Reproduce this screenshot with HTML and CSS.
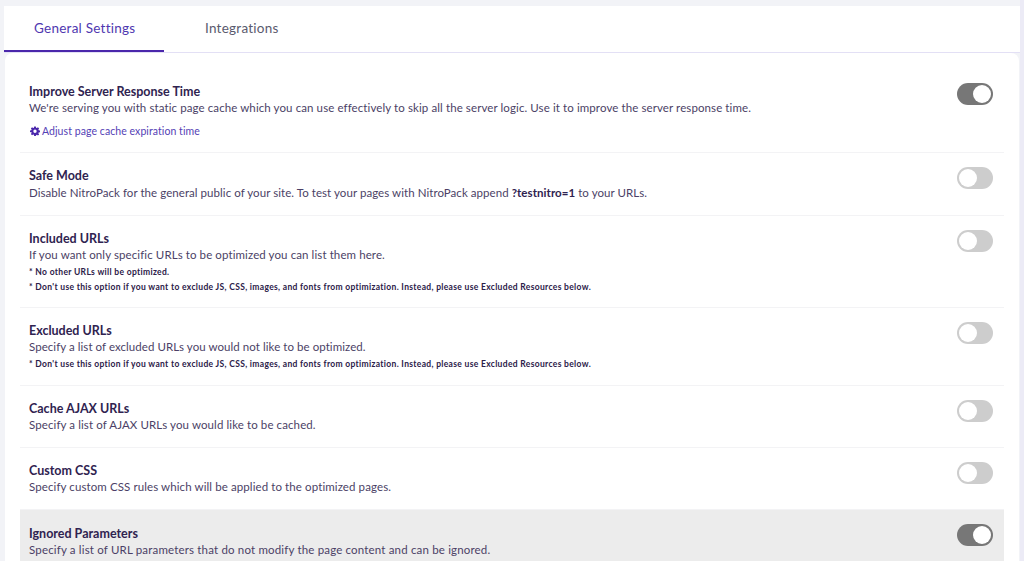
FILE: index.html
```html
<!DOCTYPE html>
<html lang="en">
<head>
<meta charset="utf-8">
<title>General Settings</title>
<link rel="stylesheet" href="styles.css">
</head>
<body>
<main class="page">
  <nav class="tabs">
    <a class="tab active">General Settings</a>
    <a class="tab">Integrations</a>
  </nav>
  <section class="card">
    <div class="row first">
      <div class="info">
        <h3>Improve Server Response Time</h3>
        <p>We're serving you with static page cache which you can use effectively to skip all the server logic. Use it to improve the server response time.</p>
        <a class="link"><svg class="gear" viewBox="0 0 24 24"><path fill-rule="evenodd" d="M10 1h4l.6 3.1 1.9.8 2.6-1.8 2.8 2.8-1.8 2.6.8 1.9L24 11v4l-3.100.6-.8 1.900 1.800 2.600-2.800 2.800-2.600-1.800-1.900.8L14 24h-4l-.6-3.100-1.900-.8-2.600 1.800-2.800-2.800 1.800-2.600-.8-1.900L0 15v-4l3.100-.6.8-1.900L2.100 5.900l2.800-2.800 2.600 1.800 1.900-.8zM12 8.500a4 4 0 1 0 0 8 4 4 0 0 0 0-8z"/></svg>Adjust page cache expiration time</a>
      </div>
      <span class="toggle on"></span>
    </div>
    <div class="row safe">
      <div class="info">
        <h3>Safe Mode</h3>
        <p>Disable NitroPack for the general public of your site. To test your pages with NitroPack append <b>?testnitro=1</b> to your URLs.</p>
      </div>
      <span class="toggle"></span>
    </div>
    <div class="row included">
      <div class="info">
        <h3>Included URLs</h3>
        <p>If you want only specific URLs to be optimized you can list them here.</p>
        <small>* No other URLs will be optimized.</small>
        <small>* Don't use this option if you want to exclude JS, CSS, images, and fonts from optimization. Instead, please use Excluded Resources below.</small>
      </div>
      <span class="toggle"></span>
    </div>
    <div class="row excluded">
      <div class="info">
        <h3>Excluded URLs</h3>
        <p>Specify a list of excluded URLs you would not like to be optimized.</p>
        <small>* Don't use this option if you want to exclude JS, CSS, images, and fonts from optimization. Instead, please use Excluded Resources below.</small>
      </div>
      <span class="toggle"></span>
    </div>
    <div class="row short">
      <div class="info">
        <h3>Cache AJAX URLs</h3>
        <p>Specify a list of AJAX URLs you would like to be cached.</p>
      </div>
      <span class="toggle"></span>
    </div>
    <div class="row short">
      <div class="info">
        <h3>Custom CSS</h3>
        <p>Specify custom CSS rules which will be applied to the optimized pages.</p>
      </div>
      <span class="toggle"></span>
    </div>
    <div class="row highlighted">
      <div class="info">
        <h3>Ignored Parameters</h3>
        <p>Specify a list of URL parameters that do not modify the page content and can be ignored.</p>
      </div>
      <span class="toggle on"></span>
    </div>
  </section>
</main>
</body>
</html>
```
FILE: styles.css
```css
html, body {
  margin: 0;
  height: 561px;
  overflow: hidden;
}
body {
  background: #f2f3f7;
  font-family: "Lato", "Noto Sans", sans-serif;
  color: #3c3056;
}
.page {
  box-sizing: border-box;
  height: 561px;
  padding: 6px 4px 0 4px;
  background: linear-gradient(90deg, #f2f3f7 1020px, #ecebf6 1020px);
}
.tabs {
  display: flex;
  height: 46px;
  background: #fff;
  border-bottom: 1px solid #e3e0f5;
}
.tab {
  box-sizing: border-box;
  height: 46px;
  padding: 13px 0 0 30px;
  font-size: 13.5px;
  line-height: 18px;
  letter-spacing: .25px;
  white-space: nowrap;
  color: #5a5a6e;
}
.tab.active {
  width: 160px;
  margin-right: 11px;
  color: #4f37b0;
  border-bottom: 2px solid #4a27ab;
}
.card {
  height: 520px;
  margin: 0 1px;
  padding: 0 15px;
  background: #fff;
  border-radius: 8px 8px 0 0;
}
.row {
  display: flex;
  justify-content: space-between;
  box-sizing: border-box;
  padding: 15px 11px 0 9px;
  border-bottom: 1px solid #f3f3f5;
}
.first { height: 100px; padding-top: 31px; }
.safe { height: 63px; }
.included { height: 92px; }
.excluded { height: 78px; }
.short { height: 62px; }
.highlighted { height: 60px; padding-top: 16px; background: #ececec; border-bottom: 0; }
.info { min-width: 0; }
h3 {
  margin: 0;
  font-size: 12.5px;
  line-height: 16px;
  font-weight: 700;
  letter-spacing: 0;
  color: #2f2350;
}
p {
  margin: 0;
  font-size: 11.5px;
  line-height: 15px;
  letter-spacing: .1px;
  color: #4b3f66;
}
.safe p { margin-top: 1px; letter-spacing: .06px; }
.excluded p { letter-spacing: .06px; }
.highlighted p { letter-spacing: .17px; }
p b { color: #2f2350; }
small {
  display: block;
  margin-top: 4px;
  font-size: 8.5px;
  line-height: 12px;
  font-weight: 700;
  letter-spacing: .325px;
  color: #2b2048;
}
small + small { margin-top: 3px; }
.link {
  display: flex;
  align-items: center;
  gap: 2px;
  margin: 9px 0 0 1px;
  font-size: 10.5px;
  line-height: 14px;
  letter-spacing: .07px;
  color: #5441b5;
}
.gear {
  width: 10px;
  height: 10px;
  fill: #4a27ab;
}
.toggle {
  position: relative;
  flex: none;
  width: 36px;
  height: 22px;
  margin-top: -1px;
  border-radius: 11px;
  background: #cdcdcd;
}
.toggle::after {
  content: "";
  position: absolute;
  top: 2px;
  left: 2px;
  width: 18px;
  height: 18px;
  border-radius: 50%;
  background: #fff;
}
.toggle.on { background: #777; }
.toggle.on::after { left: 16px; }
.highlighted .toggle { margin-top: -2px; }
```
